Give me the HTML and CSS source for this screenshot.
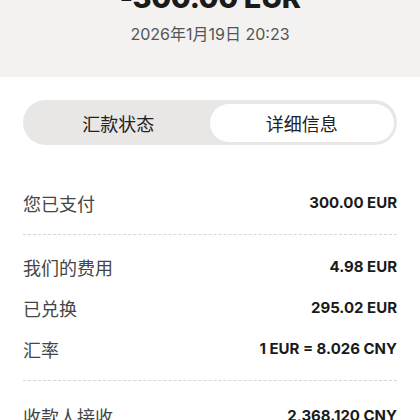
FILE: index.html
```html
<!DOCTYPE html>
<html lang="zh-CN">
<head>
    <meta charset="UTF-8">
    <meta name="viewport" content="width=device-width, initial-scale=1.0">
    <title>转账详情</title>
    <link rel="stylesheet" href="styles.css">
</head>
<body>
    <header class="summary">
        <h1 class="amount">-300.00 EUR</h1>
        <p class="date">2026年1月19日 20:23</p>
    </header>

    <section class="details">
        <div class="tabs">
            <button class="tab">汇款状态</button>
            <button class="tab active">详细信息</button>
        </div>

        <div class="group">
            <div class="row">
                <span class="label">您已支付</span>
                <span class="value">300.00 EUR</span>
            </div>
        </div>

        <div class="group">
            <div class="row">
                <span class="label">我们的费用</span>
                <span class="value">4.98 EUR</span>
            </div>
            <div class="row">
                <span class="label">已兑换</span>
                <span class="value">295.02 EUR</span>
            </div>
            <div class="row">
                <span class="label">汇率</span>
                <span class="value">1 EUR = 8.026 CNY</span>
            </div>
        </div>

        <div class="group total">
            <div class="row">
                <span class="label">收款人接收</span>
                <span class="value">2,368.120 CNY</span>
            </div>
        </div>
    </section>
</body>
</html>
```

FILE: styles.css
```css
/* Transfer details */
body {
    font-family: Inter, "Noto Sans CJK SC", sans-serif;
    margin: 0;
    padding: 0;
    background-color: #fff;
    color: #1e1e1e;
}

.summary {
    background-color: #f3f2f0;
    text-align: center;
    padding: 0 0 33px;
}

.amount {
    margin: -20px 0 0;
    font-size: 29px;
    line-height: 35px;
    font-weight: 800;
    letter-spacing: -0.4px;
    color: #1a1a1a;
}

.date {
    margin: 9px 0 0;
    font-size: 16px;
    line-height: 20px;
    color: #555;
}

.details {
    padding: 23px 23px 0;
}

.tabs {
    display: flex;
    height: 45px;
    padding: 3.5px;
    box-sizing: border-box;
    border-radius: 23px;
    background-color: #e8e7e5;
    margin-bottom: 37px;
}

.tab {
    flex: 1;
    border: none;
    border-radius: 19px;
    background: transparent;
    font-family: "Noto Sans CJK SC", sans-serif;
    font-size: 18px;
    color: #222;
    padding: 0;
}

.tab.active {
    background-color: #fff;
}

.group + .group {
    border-top: 1px dashed #d6d6d6;
    margin-top: 11px;
    padding-top: 11px;
}

.group.total {
    padding-top: 14px;
}

.row {
    display: flex;
    justify-content: space-between;
    align-items: center;
    height: 41px;
}

.label {
    font-family: "Noto Sans CJK SC", sans-serif;
    font-size: 18px;
    color: #454545;
}

.value {
    font-size: 15px;
    font-weight: 700;
    color: #1a1a1a;
}
```
